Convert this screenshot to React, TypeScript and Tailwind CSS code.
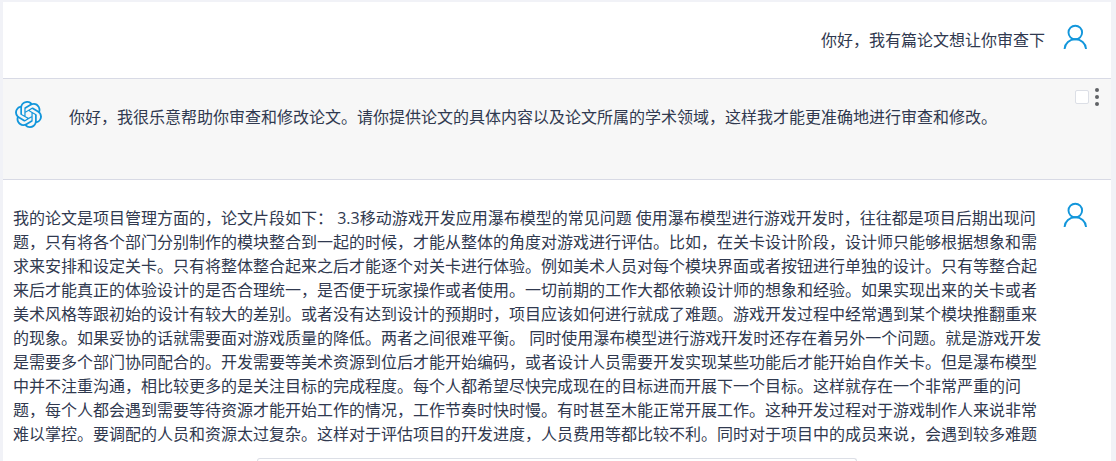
import { SiOpenai } from "react-icons/si";

function UserIcon() {
  return (
    <svg
      viewBox="0 0 26 26"
      className="h-[26px] w-[26px] shrink-0"
      fill="none"
      stroke="#1296db"
      strokeWidth="1.9"
      role="img"
      aria-label="用户"
    >
      <circle cx="14.3" cy="8.5" r="6.8" />
      <path d="M3.6 25v-.3C4 19.400 8.500 15.300 14.300 15.300S24.600 19.400 25 24.700v.3" />
    </svg>
  );
}

const paper =
  "我的论文是项目管理方面的，论文片段如下： 3.3移动游戏开发应用瀑布模型的常见问题 使用瀑布模型进行游戏开发时，往往都是项目后期出现问题，只有将各个部门分别制作的模块整合到一起的时候，才能从整体的角度对游戏进行评估。比如，在关卡设计阶段，设计师只能够根据想象和需求来安排和设定关卡。只有将整体整合起来之后才能逐个对关卡进行体验。例如美术人员对每个模块界面或者按钮进行单独的设计。只有等整合起来后才能真正的体验设计的是否合理统一，是否便于玩家操作或者使用。一切前期的工作大都依赖设计师的想象和经验。如果实现出来的关卡或者美术风格等跟初始的设计有较大的差别。或者没有达到设计的预期时，项目应该如何进行就成了难题。游戏开发过程中经常遇到某个模块推翻重来的现象。如果妥协的话就需要面对游戏质量的降低。两者之间很难平衡。 同时使用瀑布模型进行游戏幵发时还存在着另外一个问题。就是游戏开发是需要多个部门协同配合的。开发需要等美术资源到位后才能开始编码，或者设计人员需要开发实现某些功能后才能幵始自作关卡。但是瀑布模型中并不注重沟通，相比较更多的是关注目标的完成程度。每个人都希望尽快完成现在的目标进而开展下一个目标。这样就存在一个非常严重的问题，每个人都会遇到需要等待资源才能开始工作的情况，工作节奏时快时慢。有时甚至木能正常开展工作。这种开发过程对于游戏制作人来说非常难以掌控。要调配的人员和资源太过复杂。这样对于评估项目的幵发进度，人员费用等都比较不利。同时对于项目中的成员来说，会遇到较多难题";

export default function App() {
  return (
    <div
      lang="zh-CN"
      className="flex h-screen flex-col overflow-hidden bg-[#f1f2f7] pt-0.5 pr-[5px] pl-[3px] font-['Open_Sans','Noto_Sans_CJK_SC',sans-serif] text-base leading-6 text-[#30394f]"
    >
      <main className="flex min-h-0 flex-1 flex-col bg-white">
        <section className="flex h-[77px] shrink-0 items-start justify-end gap-4 border-b border-[#d8dae5] pt-[22px] pr-6">
          <p className="pt-1">你好，我有篇论文想让你审查下</p>
          <UserIcon />
        </section>

        <section className="flex h-[101px] shrink-0 items-start border-b border-[#d8dae5] bg-[#f7f7f7] pt-2 pr-2 pl-3">
          <SiOpenai
            className="mt-[14px] h-[27px] w-[27px] shrink-0 text-[#1296db]"
            aria-label="助手"
          />
          <p className="mt-[18px] ml-[27px] flex-1">
            你好，我很乐意帮助你审查和修改论文。请你提供论文的具体内容以及论文所属的学术领域，这样我才能更准确地进行审查和修改。
          </p>
          <div className="flex items-center gap-0.5">
            <input
              type="checkbox"
              aria-label="选择消息"
              className="h-3.5 w-3.5 appearance-none rounded-xs border border-[#dcdfe6] bg-white"
            />
            <button type="button" aria-label="更多" className="flex h-5 w-3 items-center justify-center">
              <svg viewBox="0 0 4 18" className="h-[18px] w-1" fill="#606266">
                <circle cx="2" cy="2" r="2" />
                <circle cx="2" cy="9" r="2" />
                <circle cx="2" cy="16" r="2" />
              </svg>
            </button>
          </div>
        </section>

        <section className="flex min-h-0 flex-1 items-start gap-4 overflow-hidden pt-[22px] pr-6 pl-2.5">
          <p className="flex-1 pt-1">{paper}</p>
          <UserIcon />
        </section>

        <div className="mx-auto h-[3px] w-[600px] max-w-full shrink-0 rounded-t border border-b-0 border-[#dcdfe6] bg-white" />
      </main>
    </div>
  );
}
